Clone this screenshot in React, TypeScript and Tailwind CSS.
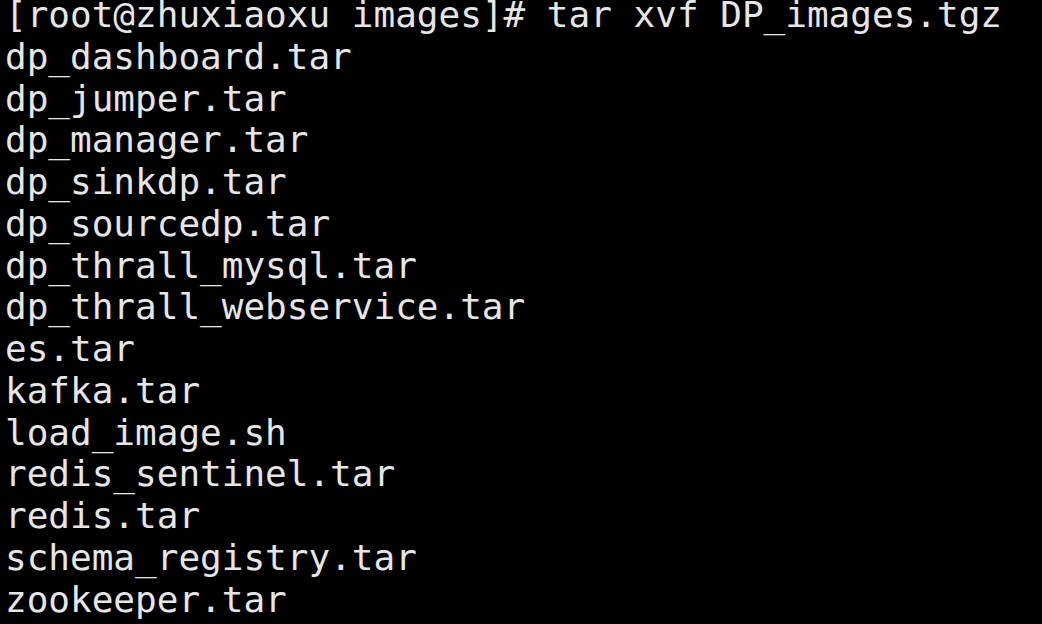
export default function App() {
  const lines = [
    "[root@zhuxiaoxu images]# tar xvf DP_images.tgz",
    "dp_dashboard.tar",
    "dp_jumper.tar",
    "dp_manager.tar",
    "dp_sinkdp.tar",
    "dp_sourcedp.tar",
    "dp_thrall_mysql.tar",
    "dp_thrall_webservice.tar",
    "es.tar",
    "kafka.tar",
    "load_image.sh",
    "redis_sentinel.tar",
    "redis.tar",
    "schema_registry.tar",
    "zookeeper.tar",
  ];
  return (
    <div className="w-[1042px] h-[624px] bg-black overflow-hidden">
      <div
        className="mt-[-3px] pl-[5px] text-[36px] text-[#e6e6e6] whitespace-pre"
        style={{ fontFamily: '"DejaVu Sans Mono", monospace' }}
      >
        {lines.map((l, i) => (
          <div key={i} className="h-[41.75px] leading-[36px]">
            {l}
          </div>
        ))}
      </div>
    </div>
  );
}
